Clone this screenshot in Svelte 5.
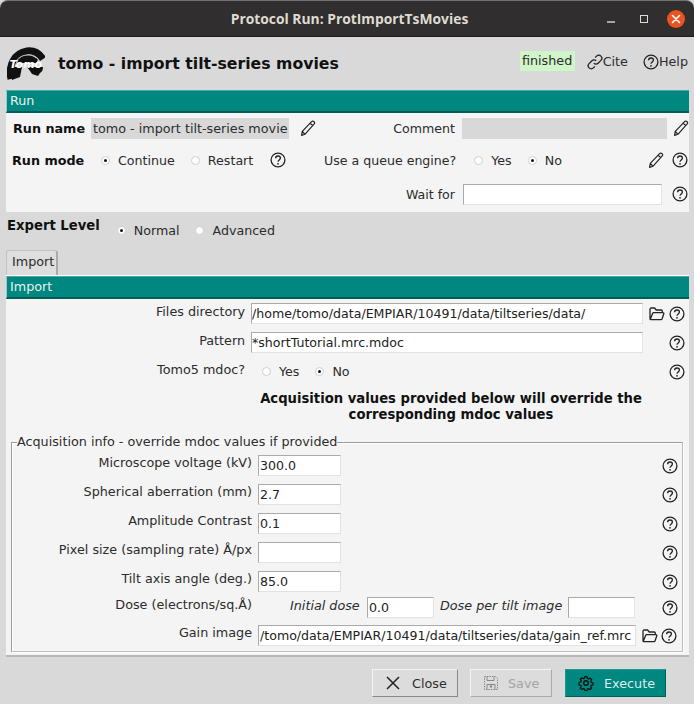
<script>
  const fields = [
    { label: 'Microscope voltage (kV)', value: '300.0' },
    { label: 'Spherical aberration (mm)', value: '2.7' },
    { label: 'Amplitude Contrast', value: '0.1' },
    { label: 'Pixel size (sampling rate) Å/px', value: '' },
    { label: 'Tilt axis angle (deg.)', value: '85.0' }
  ];
</script>

{#snippet help()}
  <svg class="icon" viewBox="0 0 16 16" width="16" height="16">
    <circle cx="8" cy="8" r="6.9" fill="none" stroke="#222" stroke-width="1.3" />
    <path d="M5.6 6.3c0-1.5 1.1-2.3 2.4-2.3s2.4.8 2.4 2.1c0 1.8-2.4 1.8-2.4 3.6" fill="none" stroke="#222" stroke-width="1.3" />
    <circle cx="8" cy="11.8" r=".9" fill="#222" />
  </svg>
{/snippet}

{#snippet pencil()}
  <svg class="icon" viewBox="0 0 16 17" width="16" height="17">
    <path d="M1.6 15.4l.7-4L11.6 1.7c.7-.7 1.7-.7 2.4 0 .7.7.7 1.7 0 2.4L4.9 14.3z M10.2 3.2l2.9 2.7 M2.4 11.4l2.5 2.9" fill="none" stroke="#222" stroke-width="1.2" stroke-linejoin="round" />
  </svg>
{/snippet}

{#snippet folder()}
  <svg class="icon" viewBox="0 0 16 14" width="16" height="14">
    <path d="M1 11.5V2.2C1 1.5 1.5 1 2.2 1h3.4l1.6 2h5c.7 0 1.1.5 1.1 1.1V5.6 M1.2 12.4l2.4-6c.2-.5.6-.8 1.1-.8h9.2c.7 0 1.1.6.9 1.2l-1.7 5c-.2.5-.6.8-1.1.8H2.2c-.7 0-1.2-.5-1.2-1.2z" fill="none" stroke="#222" stroke-width="1.3" stroke-linejoin="round" />
  </svg>
{/snippet}

{#snippet radio(label, checked)}
  <span class="radio">
    <span class="dot" class:checked></span>{label}
  </span>
{/snippet}

<div class="window">
  <div class="titlebar">
    <span class="title">Protocol Run: ProtImportTsMovies</span>
    <div class="controls">
      <span class="min"></span>
      <span class="max"></span>
      <span class="close">
        <svg viewBox="0 0 18 18" width="18" height="18">
          <path d="M5.5 5.5l7 7M12.5 5.5l-7 7" stroke="#fff" stroke-width="1.6" stroke-linecap="round" />
        </svg>
      </span>
    </div>
  </div>

  <div class="content">
    <header class="head">
      <div class="logo">
        <svg viewBox="0 0 38 34" width="38" height="34">
          <path d="M4 32C1 19 7 6 20 4c7-1 12 2 16 8" fill="none" stroke="#111" stroke-width="7" />
          <path d="M9 19C10 11 16 8 22 8c4 0 7 2 9 5l-2 3H11z" fill="#111" />
          <path d="M9 14c3-4 7-6 12-6 3 0 6 1 8 3" fill="none" stroke="#ddd" stroke-width=".8" />
          <path d="M2 20h13l-2 10-8 3z M20 20h16c0 3-1 5-3 6l-2 3-6-2-2-3z" fill="#111" />
          <text x="2.5" y="21" class="logo-text">Tomo</text>
        </svg>
      </div>
      <h1>tomo - import tilt-series movies</h1>
      <div class="head-links">
        <span class="status">finished</span>
        <span class="link cite">
          <svg class="icon" viewBox="0 0 16 16" width="16" height="16">
            <path d="M6.8 9.2a3 3 0 0 0 4.3 0l2.8-2.8a3 3 0 0 0-4.3-4.3L8.2 3.5 M9.2 6.8a3 3 0 0 0-4.3 0L2.1 9.6a3 3 0 0 0 4.3 4.3l1.4-1.4" fill="none" stroke="#222" stroke-width="1.3" />
          </svg>Cite
        </span>
        <span class="link help">{@render help()}Help</span>
      </div>
    </header>

    <section class="section">
      <div class="bar">Run</div>
      <div class="run-body">
        <div class="run-row first">
          <span class="run-label name">Run name</span>
          <span class="readonly name-box">tomo - import tilt-series movie</span>
          <span class="pencil-a">{@render pencil()}</span>
          <span class="side-label comment">Comment</span>
          <span class="readonly comment-box"></span>
          <span class="pencil-b">{@render pencil()}</span>
        </div>
        <div class="run-row second">
          <span class="run-label mode">Run mode</span>
          <span class="radios mode-radios">
            {@render radio('Continue', true)}
            {@render radio('Restart', false)}
          </span>
          <span class="mode-help">{@render help()}</span>
          <span class="side-label queue">Use a queue engine?</span>
          <span class="radios queue-radios">
            {@render radio('Yes', false)}
            {@render radio('No', true)}
          </span>
          <span class="queue-icons">{@render pencil()}{@render help()}</span>
        </div>
        <div class="run-row third">
          <span class="side-label wait">Wait for</span>
          <span class="input wait-box"></span>
          <span class="wait-help">{@render help()}</span>
        </div>
      </div>
    </section>

    <div class="expert">
      <span class="expert-label">Expert Level</span>
      <span class="radios expert-radios">
        {@render radio('Normal', true)}
        {@render radio('Advanced', false)}
      </span>
    </div>

    <div class="tab">Import</div>

    <section class="section import">
      <div class="bar">Import</div>
      <div class="import-body">
        <div class="form-row">
          <span class="form-label">Files directory</span>
          <span class="input path">/home/tomo/data/EMPIAR/10491/data/tiltseries/data/</span>
          <span class="row-icons">{@render folder()}{@render help()}</span>
        </div>
        <div class="form-row">
          <span class="form-label">Pattern</span>
          <span class="input path">*shortTutorial.mrc.mdoc</span>
          <span class="row-icons">{@render help()}</span>
        </div>
        <div class="form-row">
          <span class="form-label">Tomo5 mdoc?</span>
          <span class="radios tomo-radios">
            {@render radio('Yes', false)}
            {@render radio('No', true)}
          </span>
          <span class="row-icons">{@render help()}</span>
        </div>
        <p class="note">Acquisition values provided below will override the<br />corresponding mdoc values</p>

        <fieldset>
          <legend>Acquisition info - override mdoc values if provided</legend>
          {#each fields as field}
            <div class="acq-row">
              <span class="acq-label">{field.label}</span>
              <span class="input small">{field.value}</span>
              <span class="acq-help">{@render help()}</span>
            </div>
          {/each}
          <div class="acq-row dose">
            <span class="acq-label">Dose (electrons/sq.Å)</span>
            <em class="dose-a">Initial dose</em>
            <span class="input dose-in">0.0</span>
            <em class="dose-b">Dose per tilt image</em>
            <span class="input dose-in"></span>
            <span class="acq-help">{@render help()}</span>
          </div>
          <div class="acq-row gain">
            <span class="acq-label">Gain image</span>
            <span class="input gain-in">/tomo/data/EMPIAR/10491/data/tiltseries/data/gain_ref.mrc</span>
            <span class="gain-icons">{@render folder()}{@render help()}</span>
          </div>
        </fieldset>
      </div>
    </section>

    <footer class="actions">
      <button class="btn close-btn">
        <svg viewBox="0 0 14 14" width="14" height="14">
          <path d="M1 1l12 12M13 1L1 13" stroke="#222" stroke-width="1.5" />
        </svg>Close
      </button>
      <button class="btn disabled">
        <svg viewBox="0 0 16 16" width="16" height="16">
          <path d="M1.5 1.5h11l2 2v11h-13z" fill="none" stroke="#888" stroke-dasharray="1.5 1" />
          <path d="M4 1.5v4h7v-4 M4 14.5v-5h8v5" fill="none" stroke="#888" />
          <circle cx="8" cy="11.5" r="1.2" fill="#888" />
        </svg>Save
      </button>
      <button class="btn primary">
        <svg viewBox="0 0 16 16" width="16" height="16">
          <circle cx="8" cy="8" r="2.3" fill="none" stroke="#111" stroke-width="1.4" />
          <path d="M6.8 1h2.4l.4 2 1.3.6 1.8-1 1.6 1.7-1 1.7.5 1.3 2 .5v2.4l-2 .4-.6 1.3 1 1.8-1.6 1.6-1.8-1-1.3.5-.4 2H6.8l-.4-2-1.3-.5-1.8 1-1.6-1.7 1-1.7-.5-1.3-2-.4V7.4l2-.5.5-1.3-1-1.7 1.7-1.7 1.7 1 1.3-.6z" transform="translate(.8 .8) scale(.9)" fill="none" stroke="#111" stroke-width="1.4" stroke-linejoin="round" />
        </svg>Execute
      </button>
    </footer>
  </div>
</div>

<style>
  :global(body) {
    margin: 0;
    background: #d9d9d9;
  }

  .window {
    width: 694px;
    height: 704px;
    overflow: hidden;
    font-family: "DejaVu Sans", sans-serif;
    font-size: 12.75px;
    color: #2c2c2c;
    background: #d9d9d9;
  }

  .titlebar {
    height: 37px;
    box-sizing: border-box;
    background: #302e2e;
    border-top: 1px solid #77706e;
    border-bottom: 1px solid #1d1c1c;
    border-radius: 8px 8px 0 0;
    display: flex;
    align-items: center;
    justify-content: center;
    padding-left: 5px;
    position: relative;
  }

  .title {
    font-family: "Open Sans", sans-serif;
    font-weight: 700;
    font-size: 13.85px;
    color: #dfdbd2;
  }

  .controls {
    position: absolute;
    right: 9px;
    top: 9px;
    display: flex;
    align-items: center;
  }

  .min {
    width: 8px;
    height: 2px;
    background: #a9a7a5;
    margin-top: 5px;
  }

  .max {
    width: 6px;
    height: 6px;
    border: 1px solid #dfdbd2;
    margin-left: 25px;
  }

  .close {
    width: 18px;
    height: 18px;
    border-radius: 50%;
    background: #e95420;
    display: block;
    margin-left: 19px;
  }

  .content {
    padding: 0 6px;
  }

  .head {
    height: 53px;
    display: flex;
    align-items: center;
  }

  .logo {
    width: 38px;
    height: 34px;
    margin-left: 1px;
    margin-top: 1px;
  }

  .logo-text {
    font-family: "DejaVu Sans", sans-serif;
    font-size: 11px;
    font-weight: 700;
    font-style: italic;
    fill: #fff;
  }

  h1 {
    margin: 0 0 0 13px;
    font-size: 15.7px;
    font-weight: 700;
    color: #111;
  }

  .head-links {
    margin-left: auto;
    display: flex;
    align-items: center;
  }

  .status {
    background: #d0f5c8;
    width: 55px;
    height: 20px;
    line-height: 20px;
    text-align: center;
    margin-top: -5px;
  }

  .link {
    display: flex;
    align-items: center;
  }

  .cite {
    margin-left: 12px;
    margin-top: -4px;
  }

  .help {
    margin-left: 15px;
    margin-top: -4px;
  }

  .icon {
    display: block;
  }

  .section {
    width: 683px;
  }

  .bar {
    height: 23px;
    box-sizing: border-box;
    background: #00877f;
    color: #e8f2f0;
    border-top: 1px solid #4aa9a3;
    border-bottom: 2px solid #045c56;
    border-left: 1px solid #9cc;
    padding-left: 3px;
    line-height: 19px;
  }

  .run-body {
    height: 99px;
    background: #f4f4f4;
    box-sizing: border-box;
    padding-top: 5px;
  }

  .run-row {
    display: flex;
    align-items: center;
  }

  .first {
    height: 21px;
  }

  .second {
    height: 20px;
    margin-top: 11px;
  }

  .third {
    height: 20px;
    margin-top: 14px;
  }

  .run-label {
    font-weight: 700;
    color: #111;
    margin-left: 6px;
    flex: none;
  }

  .name {
    width: 78px;
    margin-left: 7px;
  }

  .mode {
    width: 89px;
  }

  .readonly {
    height: 21px;
    line-height: 21px;
    background: #d8d8d8;
    box-sizing: border-box;
    flex: none;
  }

  .name-box {
    width: 198px;
    padding-left: 2px;
    white-space: nowrap;
    overflow: hidden;
  }

  .comment-box {
    width: 205px;
    margin-left: 7px;
  }

  .pencil-a {
    margin-left: 11px;
  }

  .pencil-b {
    margin-left: 6px;
  }

  .side-label {
    text-align: right;
    flex: none;
    font-size: 12.6px;
  }

  .comment {
    width: 139px;
  }

  .radios {
    display: flex;
    align-items: center;
    flex: none;
    font-size: 12.65px;
  }

  .radio {
    display: flex;
    align-items: center;
    white-space: nowrap;
  }

  .dot {
    width: 9px;
    height: 9px;
    border-radius: 50%;
    background: #fff;
    border: 1px solid #cfcfcf;
    margin-right: 8px;
    box-sizing: border-box;
    position: relative;
  }

  .dot.checked::after {
    content: "";
    position: absolute;
    left: 2px;
    top: 2px;
    width: 3px;
    height: 3px;
    border-radius: 50%;
    background: #111;
  }

  .mode-radios {
    gap: 16px;
  }

  .mode-help {
    margin-left: 17px;
  }

  .queue {
    width: 149px;
    margin-left: 21px;
  }

  .queue-radios {
    margin-left: 18px;
    gap: 16px;
  }

  .queue-icons {
    display: flex;
    align-items: center;
    gap: 8px;
    margin-left: auto;
    margin-right: 1px;
  }

  .wait {
    width: 449px;
  }

  .wait-box {
    width: 199px;
    margin-left: 8px;
  }

  .wait-help {
    margin-left: 10px;
  }

  .input {
    display: block;
    height: 21px;
    line-height: 19px;
    font-size: 12.6px;
    box-sizing: border-box;
    background: #fff;
    border: 1px solid #e2e2e2;
    border-top-color: #aaa;
    border-left-color: #aaa;
    padding-left: 1px;
    white-space: nowrap;
    overflow: hidden;
    flex: none;
    color: #222;
  }

  .expert {
    height: 38px;
    display: flex;
    align-items: flex-start;
    padding-top: 6px;
    box-sizing: border-box;
  }

  .expert-label {
    font-weight: 700;
    font-size: 13.2px;
    color: #111;
    margin-left: 1px;
  }

  .expert-radios {
    margin-left: 17px;
    margin-top: 5px;
    gap: 16px;
  }

  .tab {
    width: 52px;
    height: 25px;
    box-sizing: border-box;
    background: #dedede;
    border: 1px solid #c4c4c4;
    border-right: 2px solid #aaa;
    border-bottom: none;
    border-radius: 3px 3px 0 0;
    padding: 3px 0 0 5px;
  }

  .import {
    background: #f4f4f4;
    height: 382px;
    border-bottom: 2px solid #b8b8b8;
    box-sizing: border-box;
    border-top: 1px solid #fff;
  }

  .form-row {
    display: flex;
    align-items: center;
    height: 29px;
  }

  .form-label {
    width: 239px;
    text-align: right;
    flex: none;
    margin-top: -4px;
  }

  .path {
    width: 392px;
    margin-left: 6px;
    padding-left: 0;
  }

  .row-icons {
    margin-left: auto;
    margin-right: 4px;
    display: flex;
    align-items: center;
    gap: 4px;
  }

  .tomo-radios {
    margin-left: 17px;
    gap: 16px;
  }

  .note {
    margin: 5px 0 0 238px;
    width: 414px;
    text-align: center;
    font-weight: 700;
    font-size: 13.2px;
    color: #111;
    line-height: 16px;
  }

  fieldset {
    margin: 11px 6px 0 5px;
    padding: 1px 0 0;
    border: 1px solid #9c9c9c;
    border-right-color: #bdbdbd;
    border-bottom-color: #bdbdbd;
    box-shadow: inset 1px 1px 0 #fff, 1px 1px 0 #fff;
    height: 218px;
    box-sizing: border-box;
    min-width: 0;
  }

  legend {
    padding: 0;
    margin-left: 5px;
    line-height: 16px;
  }

  .acq-row {
    display: flex;
    align-items: center;
    height: 29px;
  }

  .acq-label {
    width: 240px;
    text-align: right;
    flex: none;
    margin-right: 6px;
    margin-top: -6px;
  }

  .small {
    width: 83px;
  }

  .acq-help {
    margin-left: auto;
    margin-right: 4px;
  }

  .dose em {
    font-style: italic;
    flex: none;
    margin-top: -4px;
  }

  .dose-a {
    margin-left: 32px;
    width: 77px;
  }

  .dose-b {
    margin-left: 6px;
    width: 128px;
  }

  .dose-in {
    width: 67px;
  }

  .gain-in {
    width: 378px;
  }

  .gain-icons {
    margin-left: 6px;
    display: flex;
    align-items: center;
    gap: 3px;
  }

  .dose {
    height: 27px;
    margin-top: -2px;
  }

  .actions {
    display: flex;
    justify-content: flex-end;
    padding: 12px 22px 0 0;
  }

  .btn {
    height: 28px;
    box-sizing: border-box;
    display: flex;
    align-items: center;
    font: inherit;
    color: #2c2c2c;
    background: #dcdcdc;
    border: 1px solid #f4f4f4;
    border-right-color: #888;
    border-bottom-color: #888;
    padding: 0;
  }

  .close-btn {
    width: 86px;
    padding-left: 13px;
    gap: 12px;
  }

  .disabled {
    color: #a4a4a4;
    width: 82px;
    margin-left: 12px;
    padding-left: 12px;
    gap: 9px;
    border-right-color: #aaa;
    border-bottom-color: #aaa;
  }

  .primary {
    width: 101px;
    margin-left: 13px;
    padding-left: 12px;
    gap: 10px;
    background: #00877f;
    color: #dbeeec;
    border-color: #1a9a92;
    border-right-color: #045c56;
    border-bottom-color: #045c56;
  }
</style>
